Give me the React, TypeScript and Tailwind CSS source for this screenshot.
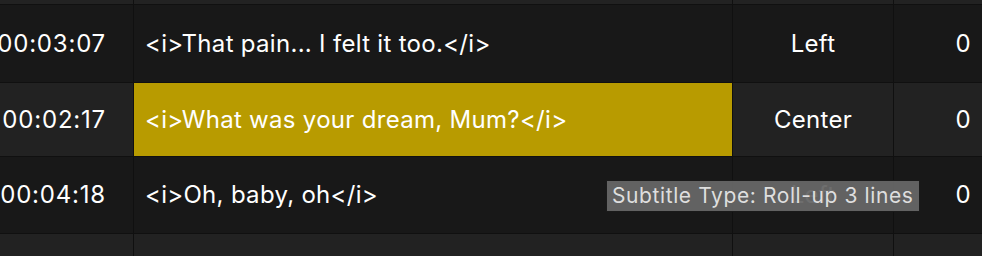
import React from 'react';

type Row = {
  time: string;
  text: string;
  align: string;
  num: string;
  h: string;
  alt?: boolean;
  active?: boolean;
};

const rows: Row[] = [
  { time: '00:03:07', text: '<i>That pain... I felt it too.</i>', align: 'Left', num: '0', h: 'h-[77px]' },
  { time: '00:02:17', text: '<i>What was your dream, Mum?</i>', align: 'Center', num: '0', h: 'h-[73px]', alt: true, active: true },
  { time: '00:04:18', text: '<i>Oh, baby, oh</i>', align: 'Left', num: '0', h: 'h-[76px]' },
];

const App = () => {
  return (
    <div className="relative h-[256px] w-[982px] overflow-hidden bg-[#101010] font-['Inter','Noto_Sans',sans-serif] text-[24px] tracking-[0.3px] text-white">
      <div className="grid grid-cols-[133px_598px_160px_88px] gap-px">
        {/* partial row above */}
        <div className="h-[4px] bg-[#222222]" />
        <div className="h-[4px] bg-[#222222]" />
        <div className="h-[4px] bg-[#222222]" />
        <div className="h-[4px] bg-[#222222]" />

        {rows.map((row) => {
          const bg = row.alt ? 'bg-[#222222]' : 'bg-[#181818]';
          return (
            <React.Fragment key={row.time}>
              <div className={`${row.h} ${bg} flex items-center justify-end pr-[27px] whitespace-nowrap tracking-[0.8px]`}>
                {row.time}
              </div>
              <div
                className={`${row.h} ${row.active ? 'bg-[#b89b00]' : bg} flex items-center pl-[11px]`}
              >
                {row.text}
              </div>
              <div className={`${row.h} ${bg} flex items-center justify-center`}>
                {row.align}
              </div>
              <div className={`${row.h} ${bg} flex items-center justify-end pr-[11px]`}>
                {row.num}
              </div>
            </React.Fragment>
          );
        })}

        <div className="h-[30px] bg-[#222222]" />
        <div className="h-[30px] bg-[#222222]" />
        <div className="h-[30px] bg-[#222222]" />
        <div className="h-[30px] bg-[#222222]" />
      </div>

      {/* tooltip */}
      <div className="absolute left-[606px] top-[180px] flex h-[32px] w-[314px] items-center whitespace-nowrap border border-[#1a1a1a] bg-[#666666]/95 pl-[5px] text-[21px] tracking-[0.6px] text-[#dedede]">
        Subtitle Type: Roll-up 3 lines
      </div>
    </div>
  );
};

export default App;
